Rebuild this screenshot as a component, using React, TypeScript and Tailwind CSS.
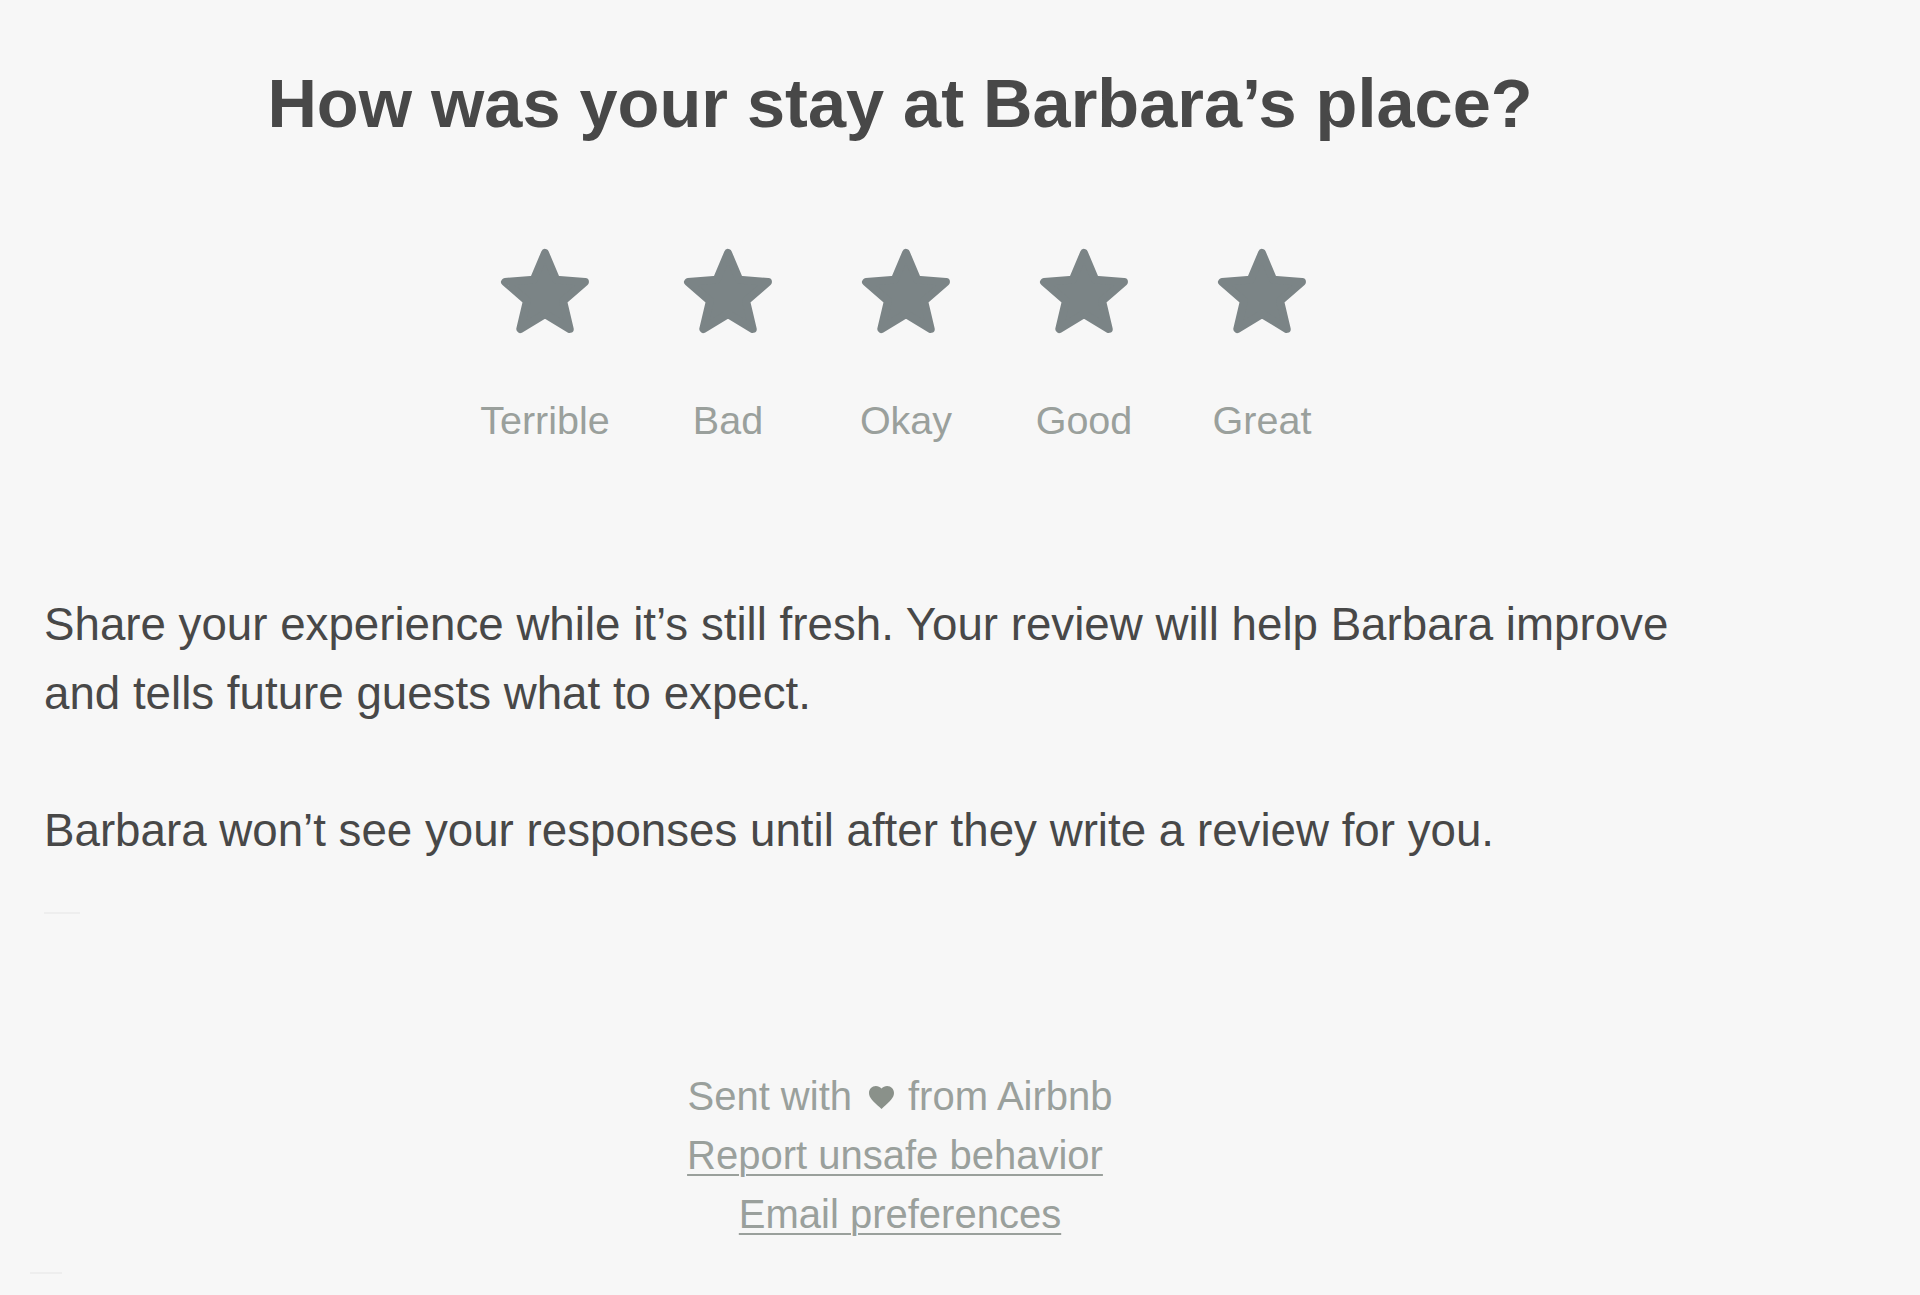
const ratings = [
  { label: 'Terrible', width: 'w-[188px]' },
  { label: 'Bad', width: 'w-[178px]' },
  { label: 'Okay', width: 'w-[178px]' },
  { label: 'Good', width: 'w-[178px]' },
  { label: 'Great', width: 'w-[178px]' },
];

const starPoints = (() => {
  const cx = 45;
  const cy = 48;
  const outer = 42;
  const inner = 19;
  const pts: string[] = [];
  for (let i = 0; i < 10; i++) {
    const r = i % 2 === 0 ? outer : inner;
    const a = (Math.PI / 5) * i - Math.PI / 2;
    pts.push(`${(cx + r * Math.cos(a)).toFixed(2)},${(cy + r * Math.sin(a)).toFixed(2)}`);
  }
  return pts.join(' ');
})();

const Star = () => (
  <svg width="90" height="90" viewBox="0 0 90 90" aria-hidden="true">
    <polygon
      points={starPoints}
      fill="#7b8486"
      stroke="#7b8486"
      strokeWidth="8"
      strokeLinejoin="round"
    />
  </svg>
);

const Heart = () => (
  <svg
    width="27"
    height="23"
    viewBox="2 3 20 18.4"
    className="ml-[16px] mr-[13px] inline-block align-[1px]"
    aria-hidden="true"
  >
    <path
      d="M12 21.35l-1.45-1.32C5.4 15.36 2 12.28 2 8.5 2 5.42 4.42 3 7.5 3c1.74 0 3.41.81 4.5 2.09C13.09 3.81 14.76 3 16.5 3 19.58 3 22 5.42 22 8.5c0 3.78-3.4 6.86-8.55 11.54L12 21.35z"
      fill="#8a918a"
    />
  </svg>
);

export default function App() {
  return (
    <div className="min-h-screen bg-[#f7f7f7] font-['Liberation_Sans',Arial,sans-serif]">
      <div className="ml-[44px] w-[1712px] pt-[63px]">
        <h1 className="text-center text-[68.5px] leading-[82px] font-bold text-[#484848]">
          How was your stay at Barbara’s place?
        </h1>

        <div className="mt-[102px] flex justify-center pl-[2px]">
          {ratings.map((r) => (
            <div key={r.label} className={`flex ${r.width} flex-col items-center`}>
              <Star />
              <span className="mt-[60px] text-[39.5px] leading-[47px] text-[#9aa09c]">{r.label}</span>
            </div>
          ))}
        </div>

        <div className="mt-[146px] w-[1680px] text-[45.7px] leading-[69px] text-[#484848]">
          <p>
            Share your experience while it’s still fresh. Your review will help Barbara improve and
            tells future guests what to expect.
          </p>
          <p className="mt-[68px]">
            Barbara won’t see your responses until after they write a review for you.
          </p>
        </div>

        <div className="mt-[47px] h-[2px] w-[36px] bg-[#eeeeee]" />

        <div className="mt-[153px] flex flex-col items-center text-[40px] leading-[59px] text-[#9aa09c]">
          <p>
            Sent with<Heart />from Airbnb
          </p>
          <a href="#" className="pr-[10px] underline underline-offset-[5px] decoration-[2px]">
            Report unsafe behavior
          </a>
          <a href="#" className="underline underline-offset-[5px] decoration-[2px]">
            Email preferences
          </a>
        </div>
      </div>
      <div className="ml-[30px] mt-[28px] h-[2px] w-[32px] bg-[#eeeeee]" />
    </div>
  );
}
